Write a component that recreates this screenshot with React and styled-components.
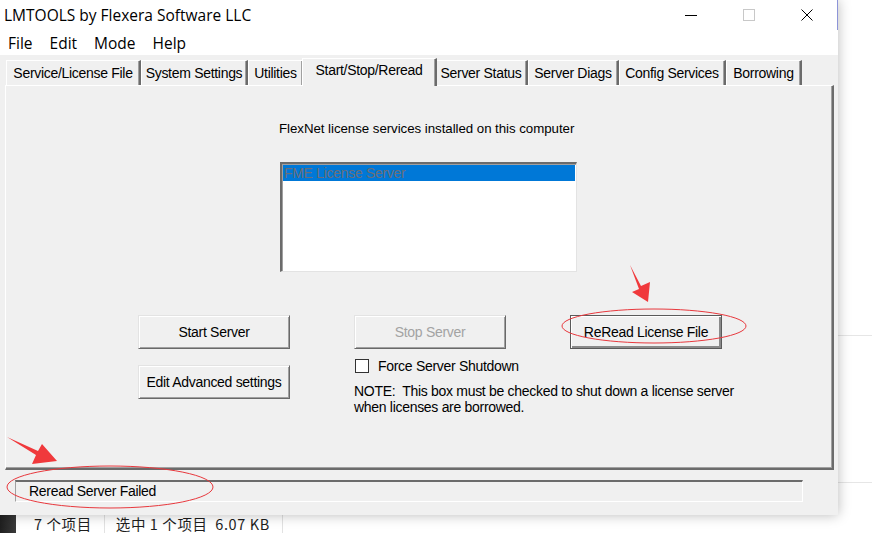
import React from "react";
import styled, { createGlobalStyle } from "styled-components";

const GlobalStyle = createGlobalStyle`
  html, body {
    margin: 0;
    padding: 0;
    background: #ffffff;
  }
  body {
    font-family: "Liberation Sans", Arial, sans-serif;
  }
`;

const tabs = [
  { label: "Service/License File", w: 135 },
  { label: "System Settings", w: 107 },
  { label: "Utilities", w: 56 },
  { label: "Start/Stop/Reread", w: 131, active: true },
  { label: "Server Status", w: 93 },
  { label: "Server Diags", w: 91 },
  { label: "Config Services", w: 107 },
  { label: "Borrowing", w: 76 },
];

const menus = ["File", "Edit", "Mode", "Help"];

const App = () => {
  return (
    <>
      <GlobalStyle />
      <Desktop>
        <Window>
          <TitleBar>
            <Title>LMTOOLS by Flexera Software LLC</Title>
            <Controls>
              <CtrlButton>
                <svg width="12" height="12" viewBox="0 0 12 12">
                  <path d="M0 6.5h12" stroke="#000" strokeWidth="1" />
                </svg>
              </CtrlButton>
              <CtrlButton>
                <svg width="12" height="12" viewBox="0 0 12 12">
                  <rect x="0.5" y="0.5" width="11" height="11" fill="none" stroke="#c8c8c8" />
                </svg>
              </CtrlButton>
              <CtrlButton>
                <svg width="12" height="12" viewBox="0 0 12 12">
                  <path d="M0.5 0.5L11.5 11.5M11.5 0.5L0.5 11.5" stroke="#000" strokeWidth="1" />
                </svg>
              </CtrlButton>
            </Controls>
          </TitleBar>

          <MenuBar>
            {menus.map((m) => (
              <MenuItem key={m}>{m}</MenuItem>
            ))}
          </MenuBar>

          <Body>
            <TabStrip>
              {tabs.map((t) => (
                <Tab key={t.label} $w={t.w} $active={t.active}>
                  {t.label}
                </Tab>
              ))}
            </TabStrip>

            <Panel>
              <Caption>FlexNet license services installed on this computer</Caption>
              <ListBox>
                <ListRow $selected>FME License Server</ListRow>
              </ListBox>

              <ButtonGrid>
                <Button>Start Server</Button>
                <Button disabled>Stop Server</Button>
                <Button $default>ReRead License File</Button>
                <Button $top={6}>Edit Advanced settings</Button>
                <Options>
                  <CheckRow>
                    <CheckBox />
                    <span>Force Server Shutdown</span>
                  </CheckRow>
                  <Note>
                    NOTE:&nbsp; This box must be checked to shut down a license server
                    <br />
                    when licenses are borrowed.
                  </Note>
                </Options>
              </ButtonGrid>
            </Panel>

            <StatusBar>Reread Server Failed</StatusBar>
          </Body>
        </Window>

        <Backdrop>
          <BackdropBand $h={335} />
          <BackdropBand $h={146} />
        </Backdrop>

        <ExplorerStatus>
          <DarkEdge />
          <ExplorerText>7 个项目</ExplorerText>
          <ExplorerSep />
          <ExplorerText>选中 1 个项目&nbsp;&nbsp;6.07 KB</ExplorerText>
          <ExplorerSep />
        </ExplorerStatus>

        {/* red markup drawn over the dialog */}
        <Markup width="872" height="533" viewBox="0 0 872 533">
          <g fill="none" stroke="#e8383d" strokeWidth="1">
            <ellipse cx="654" cy="326" rx="92" ry="17" />
            <ellipse cx="110" cy="487" rx="103" ry="21" />
          </g>
          <g fill="#f0393c">
            <polygon points="630,265 641,286 650,282 648,302 632,292 639,289" />
            <polygon points="7,437 38,451 42,444 57,461 32,464 36,455" />
          </g>
        </Markup>
      </Desktop>
    </>
  );
};

const Desktop = styled.div`
  position: relative;
  width: 872px;
  height: 533px;
  overflow: hidden;
  display: grid;
  grid-template-columns: 838px 1fr;
  grid-template-rows: 515px 18px;
  background: #ffffff;
`;

const Window = styled.div`
  position: relative;
  z-index: 2;
  display: flex;
  flex-direction: column;
  background: #f0f0f0;
  box-shadow: 0 0 12px rgba(0, 0, 0, 0.28);
`;

const TitleBar = styled.div`
  height: 30px;
  display: flex;
  align-items: center;
  justify-content: space-between;
  background: #ffffff;
  border-right: 1px solid #8d94d8;
  font-family: "Open Sans", "Noto Sans", sans-serif;
`;

const Title = styled.div`
  padding-left: 4px;
  font-size: 15.5px;
  color: #000;
`;

const Controls = styled.div`
  display: flex;
  margin-right: 1px;
`;

const CtrlButton = styled.div`
  width: 58px;
  height: 30px;
  display: flex;
  align-items: center;
  justify-content: center;
`;

const MenuBar = styled.div`
  height: 25px;
  display: flex;
  align-items: center;
  background: #ffffff;
  font-family: "Open Sans", "Noto Sans", sans-serif;
  font-size: 15.5px;
`;

const MenuItem = styled.span`
  padding: 0 9px 0 8px;
  color: #000;
`;

const Body = styled.div`
  flex: 1;
  display: flex;
  flex-direction: column;
  background: #f0f0f0;
  font-size: 14px;
  color: #000;
`;

const TabStrip = styled.div`
  display: flex;
  align-items: flex-end;
  height: 30px;
  padding-left: 6px;
  box-sizing: border-box;
`;

const Tab = styled.div`
  position: relative;
  box-sizing: border-box;
  width: ${(p) => (p.$active ? p.$w + 4 : p.$w)}px;
  height: ${(p) => (p.$active ? 28 : 25)}px;
  margin: 0 ${(p) => (p.$active ? -2 : 0)}px ${(p) => (p.$active ? -1 : 0)}px;
  z-index: ${(p) => (p.$active ? 2 : 1)};
  padding-top: ${(p) => (p.$active ? 3 : 4)}px;
  text-align: center;
  white-space: nowrap;
  font-size: 14px;
  letter-spacing: -0.3px;
  background: #f0f0f0;
  border-top: 1px solid #ffffff;
  border-left: 1px solid #ffffff;
  border-right: 2px solid #6b6b6b;
  box-shadow: inset -1px 0 #a0a0a0;
`;

const Panel = styled.div`
  box-sizing: border-box;
  width: 829px;
  height: 385px;
  margin-left: 5px;
  padding: 35px 0 0 273px;
  border-top: 1px solid #ffffff;
  border-left: 1px solid #ffffff;
  border-right: 2px solid #6b6b6b;
  border-bottom: 2px solid #6b6b6b;
  box-shadow: inset -1px -1px #a0a0a0;
  font-size: 13px;
`;

const Caption = styled.div`
  height: 16px;
  line-height: 16px;
  font-size: 13.3px;
  white-space: nowrap;
  letter-spacing: -0.05px;
`;

const ListBox = styled.div`
  box-sizing: border-box;
  width: 297px;
  height: 110px;
  margin: 25px 0 0 1px;
  padding: 1px;
  background: #ffffff;
  border-top: 2px solid #6b6b6b;
  border-left: 2px solid #6b6b6b;
  border-right: 1px solid #e3e3e3;
  border-bottom: 1px solid #e3e3e3;
  box-shadow: inset 1px 1px #a0a0a0;
`;

const ListRow = styled.div`
  height: 16px;
  line-height: 16px;
  padding-left: 1px;
  font-size: 14px;
  letter-spacing: -0.3px;
  color: ${(p) => (p.$selected ? "#6a6f78" : "#000")};
  background: ${(p) => (p.$selected ? "#0078d7" : "transparent")};
`;

const ButtonGrid = styled.div`
  display: grid;
  grid-template-columns: 152px 152px 152px;
  column-gap: 64px;
  row-gap: 10px;
  margin: 43px 0 0 -141px;
  align-items: start;
`;

const Button = styled.button`
  box-sizing: border-box;
  height: 34px;
  margin-top: ${(p) => p.$top || 0}px;
  padding: 0;
  font-family: "Liberation Sans", Arial, sans-serif;
  font-size: 14px;
  letter-spacing: -0.3px;
  color: ${(p) => (p.disabled ? "#a3a3a3" : "#000")};
  background: #f0f0f0;
  border: 1px solid;
  border-color: ${(p) =>
    p.$default ? "#5a5a5a" : "#e3e3e3 #696969 #696969 #e3e3e3"};
  box-shadow: ${(p) =>
    p.$default
      ? "inset 1px 1px #ffffff, inset -2px -2px #8a8a8a"
      : "inset 1px 1px #ffffff, inset -1px -1px #a0a0a0"};
`;

const Options = styled.div`
  grid-column: 2 / span 2;
  display: flex;
  flex-direction: column;
  font-size: 14px;
`;

const CheckRow = styled.label`
  display: flex;
  align-items: center;
  gap: 9px;
  height: 16px;
  margin-top: -1px;
  padding-left: 1px;
  letter-spacing: -0.3px;
`;

const CheckBox = styled.span`
  box-sizing: border-box;
  width: 14px;
  height: 14px;
  background: #ffffff;
  border: 1px solid #333333;
`;

const Note = styled.div`
  margin-top: 9px;
  line-height: 16px;
  white-space: nowrap;
  letter-spacing: -0.3px;
`;

const StatusBar = styled.div`
  box-sizing: border-box;
  width: 788px;
  height: 22px;
  margin: 10px 0 0 15px;
  padding-left: 13px;
  line-height: 19px;
  font-size: 14px;
  letter-spacing: -0.3px;
  background: #f0f0f0;
  border-top: 2px solid #6b6b6b;
  border-left: 1px solid #a0a0a0;
  border-right: 1px solid #ffffff;
  border-bottom: 1px solid #ffffff;
`;

const Backdrop = styled.div`
  display: flex;
  flex-direction: column;
  background: #ffffff;
`;

const BackdropBand = styled.div`
  height: ${(p) => p.$h}px;
  border-bottom: 1px solid #e6e6e6;
`;

const ExplorerStatus = styled.div`
  grid-column: 1 / span 2;
  display: flex;
  align-items: flex-start;
  background: #ffffff;
  font-family: "Noto Sans CJK SC", "Noto Sans", sans-serif;
  font-size: 14.5px;
  color: #1e1e1e;
`;

const DarkEdge = styled.div`
  width: 16px;
  height: 18px;
  margin-right: 18px;
  background: linear-gradient(90deg, #1f1f1f, #3a3a3a);
`;

const ExplorerText = styled.span`
  line-height: 16px;
  margin-top: 1px;
  letter-spacing: 0.6px;
  white-space: nowrap;
`;

const ExplorerSep = styled.span`
  width: 1px;
  height: 18px;
  margin: 0 11px 0 12px;
  background: #e2e2e2;
`;

const Markup = styled.svg`
  position: absolute;
  left: 0;
  top: 0;
  z-index: 5;
  pointer-events: none;
`;

export default App;
